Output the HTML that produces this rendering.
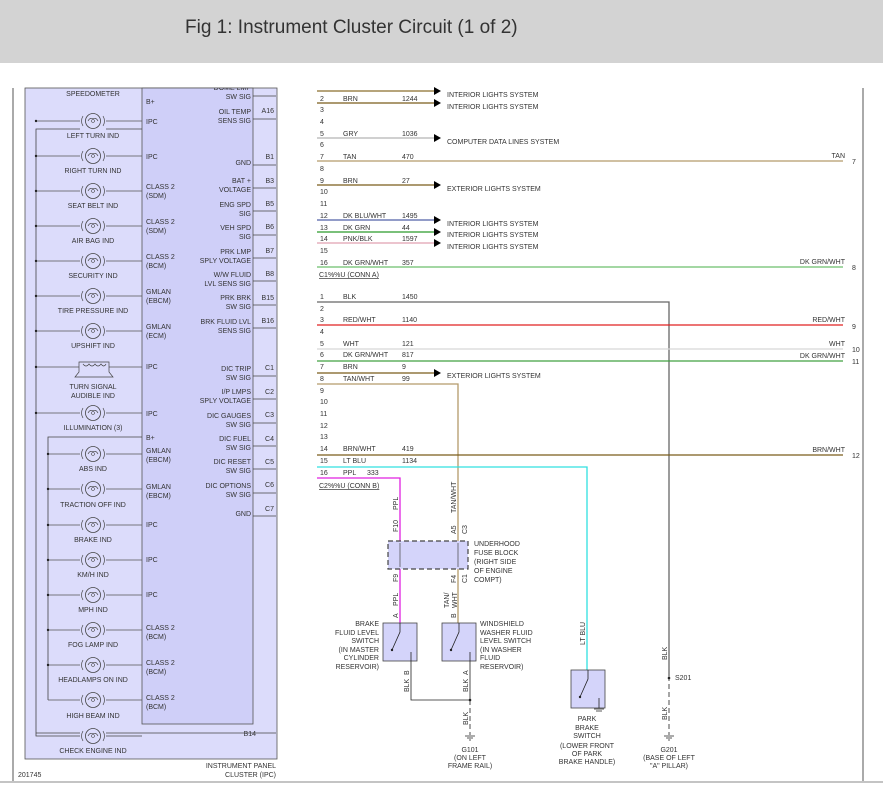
<!DOCTYPE html>
<html><head><meta charset="utf-8"><style>
html,body{margin:0;padding:0;background:#fff;}
body{width:883px;height:799px;overflow:hidden;position:relative;font-family:"Liberation Sans",sans-serif;}
#hdr{position:absolute;left:0;top:0;width:883px;height:63px;background:#d3d3d3;}
#hdr span{position:absolute;left:185px;top:17px;font-size:19px;color:#333;}
svg{position:absolute;left:0;top:0;}
text{font-family:"Liberation Sans",sans-serif;font-size:7px;fill:#333;}
</style></head><body>
<div id="hdr"><span>Fig 1: Instrument Cluster Circuit (1 of 2)</span></div>
<svg width="883" height="799" viewBox="0 0 883 799">
<defs>
<g id="bulb"><circle cx="0" cy="0" r="7.5" fill="none" stroke="#444" stroke-width="0.8"/><path d="M-10,-5 Q-13,0 -10,5 M10,-5 Q13,0 10,5 M-5,0 Q-3,-4 0,-2 Q3,-4 5,0" fill="none" stroke="#444" stroke-width="0.7"/><circle cx="0" cy="0" r="1.5" fill="none" stroke="#444" stroke-width="0.6"/></g>
<g id="arr"><path d="M-7,-4 L0,0 L-7,4 Z" fill="#000"/></g>
<clipPath id="cl"><rect x="0" y="88" width="883" height="711"/></clipPath>
</defs>
<!-- frame -->
<line x1="13" y1="88" x2="13" y2="781" stroke="#555" stroke-width="1"/>
<line x1="863" y1="88" x2="863" y2="781" stroke="#555" stroke-width="1"/>
<line x1="0" y1="782" x2="883" y2="782" stroke="#888" stroke-width="1"/>
<text x="18" y="777">201745</text>
<!-- IPC -->
<rect x="25" y="88" width="252" height="671" fill="#dcdcfb" stroke="#555" stroke-width="0.8"/>
<rect x="142" y="88" width="111" height="636" fill="#cfcff8" stroke="#555" stroke-width="0.8"/>
<text x="93" y="96" text-anchor="middle">SPEEDOMETER</text>
<text x="256" y="736" text-anchor="end" font-size="6.5">B14</text>
<text x="276" y="768" text-anchor="end">INSTRUMENT PANEL</text>
<text x="276" y="777" text-anchor="end">CLUSTER (IPC)</text>
<g stroke="#444" stroke-width="0.8" fill="none">
<path d="M142,129 H36 V736 H80"/>
<path d="M106,736 H142"/>
<path d="M36,733 H276"/>
<path d="M142,437 H48 V700"/>
</g>
<g stroke="#555" stroke-width="0.8">
<line x1="36" y1="121" x2="142" y2="121"/><line x1="36" y1="156" x2="142" y2="156"/>
<line x1="36" y1="191" x2="142" y2="191"/><line x1="36" y1="226" x2="142" y2="226"/>
<line x1="36" y1="261" x2="142" y2="261"/><line x1="36" y1="296" x2="142" y2="296"/>
<line x1="36" y1="331" x2="142" y2="331"/><line x1="36" y1="367" x2="142" y2="367"/>
<line x1="36" y1="413" x2="142" y2="413"/>
<line x1="48" y1="454" x2="142" y2="454"/><line x1="48" y1="489" x2="142" y2="489"/>
<line x1="48" y1="525" x2="142" y2="525"/><line x1="48" y1="560" x2="142" y2="560"/>
<line x1="48" y1="595" x2="142" y2="595"/><line x1="48" y1="630" x2="142" y2="630"/>
<line x1="48" y1="665" x2="142" y2="665"/><line x1="48" y1="700" x2="142" y2="700"/>
</g>
<g fill="#222">
<circle cx="36" cy="121" r="1.2"/><circle cx="36" cy="156" r="1.2"/><circle cx="36" cy="191" r="1.2"/><circle cx="36" cy="226" r="1.2"/><circle cx="36" cy="261" r="1.2"/><circle cx="36" cy="296" r="1.2"/><circle cx="36" cy="331" r="1.2"/><circle cx="36" cy="367" r="1.2"/><circle cx="36" cy="413" r="1.2"/>
<circle cx="48" cy="454" r="1.2"/><circle cx="48" cy="489" r="1.2"/><circle cx="48" cy="525" r="1.2"/><circle cx="48" cy="560" r="1.2"/><circle cx="48" cy="595" r="1.2"/><circle cx="48" cy="630" r="1.2"/><circle cx="48" cy="665" r="1.2"/>
</g>
<g fill="#dcdcfb">
<rect x="80" y="112" width="26" height="18"/><rect x="80" y="147" width="26" height="18"/><rect x="80" y="182" width="26" height="18"/><rect x="80" y="217" width="26" height="18"/><rect x="80" y="252" width="26" height="18"/><rect x="80" y="287" width="26" height="18"/><rect x="80" y="322" width="26" height="18"/><rect x="80" y="404" width="26" height="18"/><rect x="80" y="445" width="26" height="18"/><rect x="80" y="480" width="26" height="18"/><rect x="80" y="516" width="26" height="18"/><rect x="80" y="551" width="26" height="18"/><rect x="80" y="586" width="26" height="18"/><rect x="80" y="621" width="26" height="18"/><rect x="80" y="656" width="26" height="18"/><rect x="80" y="691" width="26" height="18"/><rect x="80" y="727" width="26" height="18"/>
</g>
<use href="#bulb" x="93" y="121"/><use href="#bulb" x="93" y="156"/><use href="#bulb" x="93" y="191"/><use href="#bulb" x="93" y="226"/><use href="#bulb" x="93" y="261"/><use href="#bulb" x="93" y="296"/><use href="#bulb" x="93" y="331"/><use href="#bulb" x="93" y="413"/><use href="#bulb" x="93" y="454"/><use href="#bulb" x="93" y="489"/><use href="#bulb" x="93" y="525"/><use href="#bulb" x="93" y="560"/><use href="#bulb" x="93" y="595"/><use href="#bulb" x="93" y="630"/><use href="#bulb" x="93" y="665"/><use href="#bulb" x="93" y="700"/><use href="#bulb" x="93" y="736"/>
<path d="M79,362 H109 V372 L113,377 H75 L79,372 Z M83,364 Q86,368 89,364 Q92,368 95,364 Q98,368 101,364 Q104,368 106,364" fill="#dcdcfb" stroke="#444" stroke-width="0.7"/>
<g text-anchor="middle">
<text x="93" y="138">LEFT TURN IND</text><text x="93" y="173">RIGHT TURN IND</text><text x="93" y="208">SEAT BELT IND</text><text x="93" y="243">AIR BAG IND</text><text x="93" y="278">SECURITY IND</text><text x="93" y="313">TIRE PRESSURE IND</text><text x="93" y="348">UPSHIFT IND</text><text x="93" y="389">TURN SIGNAL</text><text x="93" y="398">AUDIBLE IND</text><text x="93" y="430">ILLUMINATION (3)</text><text x="93" y="471">ABS IND</text><text x="93" y="507">TRACTION OFF IND</text><text x="93" y="542">BRAKE IND</text><text x="93" y="577">KM/H IND</text><text x="93" y="612">MPH IND</text><text x="93" y="647">FOG LAMP IND</text><text x="93" y="682">HEADLAMPS ON IND</text><text x="93" y="718">HIGH BEAM IND</text><text x="93" y="753">CHECK ENGINE IND</text>
</g>
<g>
<text x="146" y="104">B+</text><text x="146" y="124">IPC</text><text x="146" y="159">IPC</text>
<text x="146" y="189">CLASS 2</text><text x="146" y="198">(SDM)</text>
<text x="146" y="224">CLASS 2</text><text x="146" y="233">(SDM)</text>
<text x="146" y="259">CLASS 2</text><text x="146" y="268">(BCM)</text>
<text x="146" y="294">GMLAN</text><text x="146" y="303">(EBCM)</text>
<text x="146" y="329">GMLAN</text><text x="146" y="338">(ECM)</text>
<text x="146" y="369">IPC</text><text x="146" y="416">IPC</text><text x="146" y="440">B+</text>
<text x="146" y="453">GMLAN</text><text x="146" y="462">(EBCM)</text>
<text x="146" y="489">GMLAN</text><text x="146" y="498">(EBCM)</text>
<text x="146" y="527">IPC</text><text x="146" y="562">IPC</text><text x="146" y="597">IPC</text>
<text x="146" y="630">CLASS 2</text><text x="146" y="639">(BCM)</text>
<text x="146" y="665">CLASS 2</text><text x="146" y="674">(BCM)</text>
<text x="146" y="700">CLASS 2</text><text x="146" y="709">(BCM)</text>
</g>
<g text-anchor="end">
<text x="251" y="90" clip-path="url(#cl)">DOME LMP</text><text x="251" y="99">SW SIG</text>
<text x="251" y="114">OIL TEMP</text><text x="251" y="123">SENS SIG</text>
<text x="251" y="165">GND</text>
<text x="251" y="183">BAT +</text><text x="251" y="192">VOLTAGE</text>
<text x="251" y="207">ENG SPD</text><text x="251" y="216">SIG</text>
<text x="251" y="230">VEH SPD</text><text x="251" y="239">SIG</text>
<text x="251" y="254">PRK LMP</text><text x="251" y="263">SPLY VOLTAGE</text>
<text x="251" y="277">W/W FLUID</text><text x="251" y="286">LVL SENS SIG</text>
<text x="251" y="300">PRK BRK</text><text x="251" y="309">SW SIG</text>
<text x="251" y="324">BRK FLUID LVL</text><text x="251" y="333">SENS SIG</text>
<text x="251" y="371">DIC TRIP</text><text x="251" y="380">SW SIG</text>
<text x="251" y="394">I/P LMPS</text><text x="251" y="403">SPLY VOLTAGE</text>
<text x="251" y="418">DIC GAUGES</text><text x="251" y="427">SW SIG</text>
<text x="251" y="441">DIC FUEL</text><text x="251" y="450">SW SIG</text>
<text x="251" y="464">DIC RESET</text><text x="251" y="473">SW SIG</text>
<text x="251" y="488">DIC OPTIONS</text><text x="251" y="497">SW SIG</text>
<text x="251" y="516">GND</text>
</g>
<g stroke="#444" stroke-width="0.8" fill="none">
<path d="M253,96 H276 M253,119 H276 M253,165 H276 M253,188 H276 M253,211 H276 M253,235 H276 M253,258 H276 M253,281 H276 M253,305 H276 M253,328 H276 M253,376 H276 M253,399 H276 M253,423 H276 M253,446 H276 M253,469 H276 M253,493 H276 M253,516 H276"/>
</g>
<g text-anchor="end" font-size="6.5">
<text x="274" y="113">A16</text><text x="274" y="159">B1</text><text x="274" y="183">B3</text><text x="274" y="206">B5</text><text x="274" y="229">B6</text><text x="274" y="253">B7</text><text x="274" y="276">B8</text><text x="274" y="300">B15</text><text x="274" y="323">B16</text><text x="274" y="370">C1</text><text x="274" y="394">C2</text><text x="274" y="417">C3</text><text x="274" y="441">C4</text><text x="274" y="464">C5</text><text x="274" y="487">C6</text><text x="274" y="511">C7</text>
</g>
<!-- C1 connector -->
<g>
<text x="320" y="101">2</text><text x="320" y="112">3</text><text x="320" y="124">4</text><text x="320" y="136">5</text><text x="320" y="147">6</text><text x="320" y="159">7</text><text x="320" y="171">8</text><text x="320" y="183">9</text><text x="320" y="194">10</text><text x="320" y="206">11</text><text x="320" y="218">12</text><text x="320" y="230">13</text><text x="320" y="241">14</text><text x="320" y="253">15</text><text x="320" y="265">16</text>
<text x="343" y="101">BRN</text><text x="402" y="101">1244</text>
<text x="343" y="136">GRY</text><text x="402" y="136">1036</text>
<text x="343" y="159">TAN</text><text x="402" y="159">470</text>
<text x="343" y="183">BRN</text><text x="402" y="183">27</text>
<text x="343" y="218">DK BLU/WHT</text><text x="402" y="218">1495</text>
<text x="343" y="230">DK GRN</text><text x="402" y="230">44</text>
<text x="343" y="241">PNK/BLK</text><text x="402" y="241">1597</text>
<text x="343" y="265">DK GRN/WHT</text><text x="402" y="265">357</text>
<text x="319" y="277" text-decoration="underline">C1%%U (CONN A)</text>
</g>
<g fill="none" stroke-width="1.3">
<line x1="317" y1="91" x2="437" y2="91" stroke="#8a6d2c"/>
<line x1="317" y1="103" x2="437" y2="103" stroke="#7a5c1a"/>
<line x1="317" y1="138" x2="437" y2="138" stroke="#b5b5b5"/>
<line x1="317" y1="161" x2="843" y2="161" stroke="#b49a6a"/>
<line x1="317" y1="185" x2="437" y2="185" stroke="#7a5c1a"/>
<line x1="317" y1="220" x2="437" y2="220" stroke="#5060a8"/>
<line x1="317" y1="232" x2="437" y2="232" stroke="#2a9a2a"/>
<line x1="317" y1="243" x2="437" y2="243" stroke="#e0a0b0"/>
<line x1="317" y1="267" x2="843" y2="267" stroke="#6cbf6c"/>
</g>
<use href="#arr" x="441" y="91"/><use href="#arr" x="441" y="103"/><use href="#arr" x="441" y="138"/><use href="#arr" x="441" y="185"/><use href="#arr" x="441" y="220"/><use href="#arr" x="441" y="232"/><use href="#arr" x="441" y="243"/>
<text x="447" y="97">INTERIOR LIGHTS SYSTEM</text><text x="447" y="109">INTERIOR LIGHTS SYSTEM</text><text x="447" y="144">COMPUTER DATA LINES SYSTEM</text><text x="447" y="191">EXTERIOR LIGHTS SYSTEM</text><text x="447" y="226">INTERIOR LIGHTS SYSTEM</text><text x="447" y="237">INTERIOR LIGHTS SYSTEM</text><text x="447" y="249">INTERIOR LIGHTS SYSTEM</text>
<text x="845" y="158" text-anchor="end">TAN</text><text x="852" y="164">7</text>
<text x="845" y="264" text-anchor="end">DK GRN/WHT</text><text x="852" y="270">8</text>
<!-- C2 connector -->
<g>
<text x="320" y="299">1</text><text x="320" y="311">2</text><text x="320" y="322">3</text><text x="320" y="334">4</text><text x="320" y="346">5</text><text x="320" y="357">6</text><text x="320" y="369">7</text><text x="320" y="381">8</text><text x="320" y="393">9</text><text x="320" y="404">10</text><text x="320" y="416">11</text><text x="320" y="428">12</text><text x="320" y="439">13</text><text x="320" y="451">14</text><text x="320" y="463">15</text><text x="320" y="475">16</text>
<text x="343" y="299">BLK</text><text x="402" y="299">1450</text>
<text x="343" y="322">RED/WHT</text><text x="402" y="322">1140</text>
<text x="343" y="346">WHT</text><text x="402" y="346">121</text>
<text x="343" y="357">DK GRN/WHT</text><text x="402" y="357">817</text>
<text x="343" y="369">BRN</text><text x="402" y="369">9</text>
<text x="343" y="381">TAN/WHT</text><text x="402" y="381">99</text>
<text x="343" y="451">BRN/WHT</text><text x="402" y="451">419</text>
<text x="343" y="463">LT BLU</text><text x="402" y="463">1134</text>
<text x="343" y="475">PPL</text><text x="367" y="475">333</text>
<text x="319" y="488" text-decoration="underline">C2%%U (CONN B)</text>
</g>
<g fill="none" stroke-width="1.3">
<path d="M317,302 H669 V676" stroke="#666"/>
<line x1="317" y1="325" x2="843" y2="325" stroke="#e02020"/>
<line x1="317" y1="349" x2="843" y2="349" stroke="#d8d8d8"/>
<line x1="317" y1="361" x2="843" y2="361" stroke="#40a040"/>
<line x1="317" y1="373" x2="437" y2="373" stroke="#7a5c1a"/>
<path d="M317,384 H458 V541" stroke="#b49a6a"/>
<line x1="317" y1="455" x2="843" y2="455" stroke="#7a5c1a"/>
<path d="M317,467 H587 V670" stroke="#30e0e0"/>
<path d="M317,478 H400 V541" stroke="#e020e0"/>
<line x1="400" y1="569" x2="400" y2="623" stroke="#e020e0"/>
<line x1="458" y1="569" x2="458" y2="623" stroke="#b49a6a"/>
</g>
<use href="#arr" x="441" y="373"/>
<text x="447" y="378">EXTERIOR LIGHTS SYSTEM</text>
<text x="845" y="322" text-anchor="end">RED/WHT</text><text x="852" y="329">9</text>
<text x="845" y="346" text-anchor="end">WHT</text><text x="852" y="352">10</text>
<text x="845" y="358" text-anchor="end">DK GRN/WHT</text><text x="852" y="364">11</text>
<text x="845" y="452" text-anchor="end">BRN/WHT</text><text x="852" y="458">12</text>
<!-- fuse block -->
<rect x="388" y="541" width="80" height="28" fill="#d4d4fa" stroke="#444" stroke-width="1.2" stroke-dasharray="5,3"/>
<g stroke="#444" stroke-width="0.7"><line x1="400" y1="543" x2="400" y2="567"/><line x1="458" y1="543" x2="458" y2="567"/></g>
<text x="474" y="546">UNDERHOOD</text><text x="474" y="555">FUSE BLOCK</text><text x="474" y="564">(RIGHT SIDE</text><text x="474" y="573">OF ENGINE</text><text x="474" y="582">COMPT)</text>
<g font-size="6.5">
<text transform="translate(398,532) rotate(-90)">F10</text><text transform="translate(398,510) rotate(-90)">PPL</text>
<text transform="translate(456,534) rotate(-90)">A5</text><text transform="translate(467,534) rotate(-90)">C3</text>
<text transform="translate(456,513) rotate(-90)">TAN/WHT</text>
<text transform="translate(398,582) rotate(-90)">F9</text><text transform="translate(398,606) rotate(-90)">PPL</text>
<text transform="translate(398,618) rotate(-90)">A</text>
<text transform="translate(456,583) rotate(-90)">F4</text><text transform="translate(467,583) rotate(-90)">C1</text>
<text transform="translate(449,608) rotate(-90)">TAN/</text><text transform="translate(457,608) rotate(-90)">WHT</text>
<text transform="translate(456,618) rotate(-90)">B</text>
<text transform="translate(409,675) rotate(-90)">B</text><text transform="translate(409,692) rotate(-90)">BLK</text>
<text transform="translate(468,675) rotate(-90)">A</text><text transform="translate(468,692) rotate(-90)">BLK</text>
<text transform="translate(468,725) rotate(-90)">BLK</text>
<text transform="translate(585,645) rotate(-90)">LT BLU</text>
<text transform="translate(667,660) rotate(-90)">BLK</text>
<text transform="translate(667,720) rotate(-90)">BLK</text>
</g>
<!-- switches -->
<g stroke="#444" stroke-width="0.8" fill="#d4d4fa">
<rect x="383" y="623" width="34" height="38"/><rect x="442" y="623" width="34" height="38"/><rect x="571" y="670" width="34" height="38"/>
</g>
<g stroke="#222" stroke-width="0.8" fill="none">
<path d="M400,623 V632 L392,650 M411,661 V652"/><path d="M459,623 V632 L451,650 M470,661 V652"/><path d="M588,670 V679 L580,697 M599,708 V698"/>
<path d="M411,661 V700 H470 M470,661 V700"/>
<path d="M470,700 V735" stroke-dasharray="5,3"/>
<path d="M669,676 V735" stroke-dasharray="5,3"/>
<path d="M465,736 H475 M467,738 H473 M469,740 H471 M664,736 H674 M666,738 H672 M668,740 H670 M594,709 H604 M596,711 H602"/>
</g>
<g fill="#222"><circle cx="392" cy="650" r="1.2"/><circle cx="451" cy="650" r="1.2"/><circle cx="580" cy="697" r="1.2"/><circle cx="470" cy="700" r="1.3"/><circle cx="669" cy="678" r="1.3"/></g>
<g text-anchor="end">
<text x="379" y="626">BRAKE</text><text x="379" y="635">FLUID LEVEL</text><text x="379" y="643">SWITCH</text><text x="379" y="652">(IN MASTER</text><text x="379" y="660">CYLINDER</text><text x="379" y="669">RESERVOIR)</text>
</g>
<text x="480" y="626">WINDSHIELD</text><text x="480" y="635">WASHER FLUID</text><text x="480" y="643">LEVEL SWITCH</text><text x="480" y="652">(IN WASHER</text><text x="480" y="660">FLUID</text><text x="480" y="669">RESERVOIR)</text>
<text x="675" y="680">S201</text>
<g text-anchor="middle">
<text x="470" y="752">G101</text><text x="470" y="760">(ON LEFT</text><text x="470" y="768">FRAME RAIL)</text>
<text x="587" y="721">PARK</text><text x="587" y="730">BRAKE</text><text x="587" y="738">SWITCH</text><text x="587" y="748">(LOWER FRONT</text><text x="587" y="756">OF PARK</text><text x="587" y="764">BRAKE HANDLE)</text>
<text x="669" y="752">G201</text><text x="669" y="760">(BASE OF LEFT</text><text x="669" y="768">"A" PILLAR)</text>
</g>
</svg>
</body></html>
